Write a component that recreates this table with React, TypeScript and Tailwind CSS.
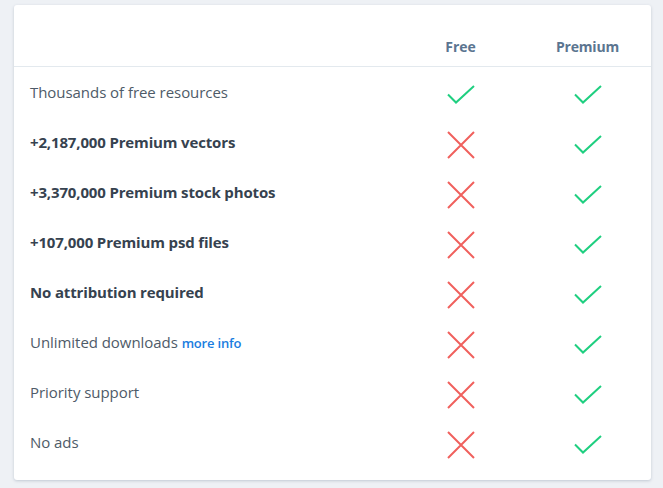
import React from "react";

const Check = () => (
  <svg width="28" height="19" viewBox="0 0 28 19" fill="none">
    <path d="M1 9.5 L9 17.5 L27 1" stroke="#1fcf80" strokeWidth="2" />
  </svg>
);

const Cross = () => (
  <svg width="28" height="28" viewBox="0 0 28 28" fill="none">
    <path d="M1 1 L27 27 M27 1 L1 27" stroke="#f0605d" strokeWidth="2" />
  </svg>
);

type Row = { label: React.ReactNode; bold?: boolean; free: boolean };

const rows: Row[] = [
  { label: "Thousands of free resources", free: true },
  { label: "+2,187,000 Premium vectors", bold: true, free: false },
  { label: "+3,370,000 Premium stock photos", bold: true, free: false },
  { label: "+107,000 Premium psd files", bold: true, free: false },
  { label: "No attribution required", bold: true, free: false },
  {
    label: (
      <>
        Unlimited downloads{" "}
        <span className="text-[13px] font-semibold tracking-[-0.2px] text-[#1a7de0]">more info</span>
      </>
    ),
    free: false,
  },
  { label: "Priority support", free: false },
  { label: "No ads", free: false },
];

export default function App() {
  return (
    <div
      className="min-h-[488px] w-[663px] bg-[#eef1f5] pl-[14px] pr-[12px] pt-[5px] pb-[8px]"
      style={{ fontFamily: "'Open Sans', 'Liberation Sans', sans-serif" }}
    >
      <div className="rounded-[3px] bg-white shadow-[0_1px_3px_rgba(60,80,110,0.25)] pb-[13px]">
        <div className="grid h-[62px] grid-cols-[1fr_127px_127px] items-end border-b border-[#e3e9ee] pb-[9px]">
          <div />
          <div className="text-center text-[14px] font-bold text-[#5b7590]">Free</div>
          <div className="text-center text-[14px] font-bold tracking-[-0.2px] text-[#5b7590]">Premium</div>
        </div>
        {rows.map((r, i) => (
          <div key={i} className="grid h-[50px] grid-cols-[1fr_127px_127px] items-center">
            <div
              className={
                "pl-[16px] pt-[1px] text-[15px] " +
                (r.bold ? "font-bold tracking-[-0.15px] text-[#36424f]" : "tracking-[-0.05px] text-[#4e5b68]")
              }
            >
              {r.label}
            </div>
            <div className="flex justify-center pt-[5px]">{r.free ? <Check /> : <Cross />}</div>
            <div className="flex justify-center pt-[5px]">
              <Check />
            </div>
          </div>
        ))}
      </div>
    </div>
  );
}
